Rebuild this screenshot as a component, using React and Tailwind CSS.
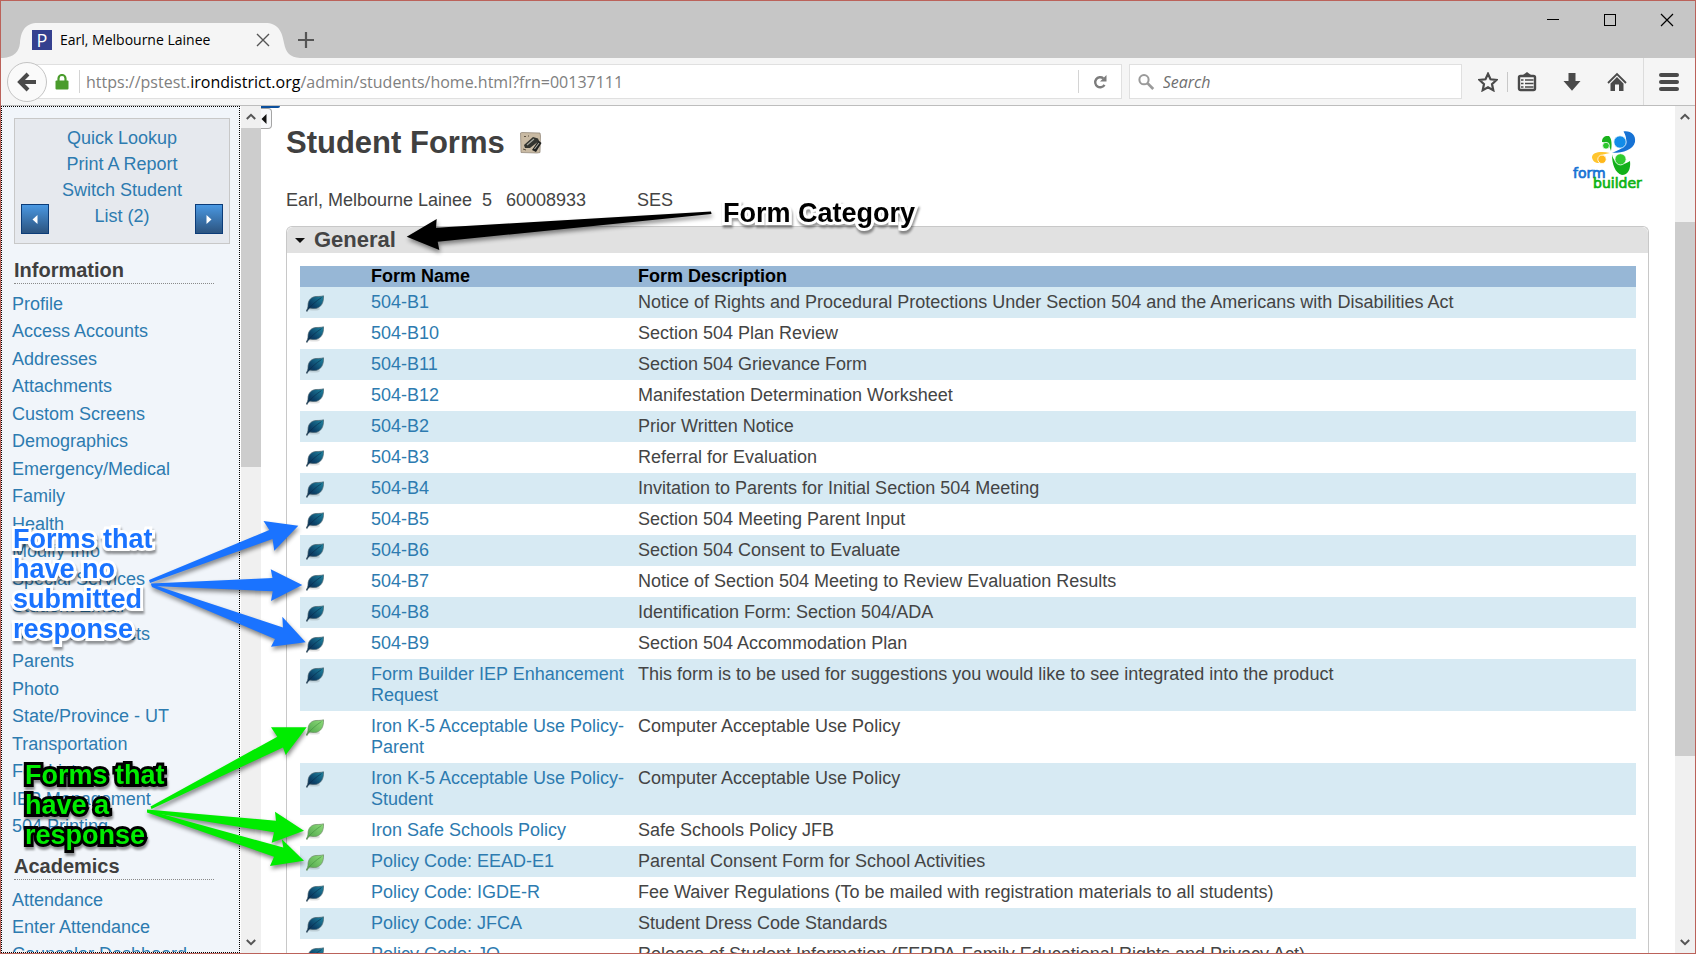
import React from "react";

const infoLinks = [
  "Profile", "Access Accounts", "Addresses", "Attachments", "Custom Screens",
  "Demographics", "Emergency/Medical", "Family", "Health", "Modify Info",
  "Special Services", "Student Email", "Student Contacts", "Parents", "Photo",
  "State/Province - UT", "Transportation", "Fee List", "IEP Management", "504 Printing",
];
const academicLinks = ["Attendance", "Enter Attendance", "Counselor Dashboard"];

const forms = [
  ["504-B1", "Notice of Rights and Procedural Protections Under Section 504 and the Americans with Disabilities Act"],
  ["504-B10", "Section 504 Plan Review"],
  ["504-B11", "Section 504 Grievance Form"],
  ["504-B12", "Manifestation Determination Worksheet"],
  ["504-B2", "Prior Written Notice"],
  ["504-B3", "Referral for Evaluation"],
  ["504-B4", "Invitation to Parents for Initial Section 504 Meeting"],
  ["504-B5", "Section 504 Meeting Parent Input"],
  ["504-B6", "Section 504 Consent to Evaluate"],
  ["504-B7", "Notice of Section 504 Meeting to Review Evaluation Results"],
  ["504-B8", "Identification Form: Section 504/ADA"],
  ["504-B9", "Section 504 Accommodation Plan"],
  ["Form Builder IEP Enhancement Request", "This form is to be used for suggestions you would like to see integrated into the product"],
  ["Iron K-5 Acceptable Use Policy-Parent", "Computer Acceptable Use Policy", true],
  ["Iron K-5 Acceptable Use Policy-Student", "Computer Acceptable Use Policy"],
  ["Iron Safe Schools Policy", "Safe Schools Policy JFB", true],
  ["Policy Code: EEAD-E1", "Parental Consent Form for School Activities", true],
  ["Policy Code: IGDE-R", "Fee Waiver Regulations (To be mailed with registration materials to all students)"],
  ["Policy Code: JFCA", "Student Dress Code Standards"],
  ["Policy Code: JO", "Release of Student Information (FERPA-Family Educational Rights and Privacy Act)"],
];

function Leaf({ done }) {
  return (
    <svg viewBox="0 0 18 17" className="block h-[17px] w-[18px]" role="img" aria-label={done ? "Has response" : "No response"}>
      <ellipse cx="8" cy="14" rx="6" ry="1.6" fill="#000" opacity="0.12" />
      <path
        d="M17.5 .8C17.9 7.600 15 13.300 8.600 13.500C6.200 13.600 4.600 12.800 3.600 13.300C2.600 13.800 1.900 15 1.100 16.500L.2 15.800C1.400 14 2.100 12.500 2 10.300C2 5 5.600 1.700 10 1.500C13 1.400 15.200 1.500 17.500 .8Z"
        fill={done ? "url(#leafGreen)" : "url(#leafBlue)"}
        stroke={done ? "#6c8a63" : "#48606c"}
        strokeWidth="0.7"
      />
      <path d="M2.500 13.500C6 10 10 6 15.500 2.600" fill="none" stroke={done ? "#3f8f3c" : "#082b49"} strokeWidth="0.6" />
    </svg>
  );
}

function Chevron({ up }) {
  return (
    <svg viewBox="0 0 10 7" className="h-[7px] w-[10px]" aria-hidden="true">
      <path d={up ? "M.8 6L5 1.800L9.200 6" : "M.8 1L5 5.200L9.200 1"} fill="none" stroke="#555" strokeWidth="2" />
    </svg>
  );
}

function SideHeading({ children }) {
  return (
    <h2 className="ml-3 mr-[25px] border-b border-dotted border-[#8a8a8a] text-[20px] font-bold leading-[25px] text-[#3f3f3f]">
      {children}
    </h2>
  );
}

function StepButton({ label, d }) {
  return (
    <button aria-label={label} className="flex h-[30px] w-[28px] items-center justify-center border border-[#0c3c78] bg-linear-to-b from-[#4a98e2] to-[#2c5480]">
      <svg viewBox="0 0 6 9" className="h-[9px] w-[6px]"><path d={d} fill="#fff" /></svg>
    </button>
  );
}

function Toolbar() {
  return (
    <div className="flex h-12 shrink-0 items-center border-b border-[#bdbdbd] bg-[#f5f5f5] pl-[6px] font-['Open_Sans',sans-serif]">
      <button aria-label="Back" className="relative z-10 flex size-10 items-center justify-center rounded-full border border-[#c4c4c4] bg-[#fafafa]">
        <svg viewBox="0 0 20 20" className="size-5" fill="none" stroke="#4a4a4a" strokeWidth="4">
          <path d="M19 10H4M11 2L3 10L11 18" />
        </svg>
      </button>
      <div className="-ml-5 flex h-[35px] flex-1 items-center border border-[#e0e0e0] bg-white pl-[27px]">
        <svg viewBox="0 0 14 16" className="h-[16px] w-[14px]" aria-hidden="true">
          <path d="M3.500 8V4.500a3.500 3.500 0 0 1 7 0V8" fill="none" stroke="#4a9c2c" strokeWidth="2.200" />
          <rect x="0.500" y="6.500" width="13" height="9" rx="1" fill="#4a9c2c" />
        </svg>
        <div className="ml-[10px] h-[23px] w-px bg-[#d4d4d4]" />
        <div role="textbox" aria-label="Address" className="flex-1 pl-[6px] text-[16px] leading-6 text-[#808080]">
          https://pstest.<span className="text-black">irondistrict.org</span>/admin/students/home.html?frn=00137111
        </div>
        <div className="h-[23px] w-px bg-[#d4d4d4]" />
        <button aria-label="Reload" className="flex h-full w-[42px] items-center justify-center">
          <svg viewBox="0 0 14 14" className="size-[14px]">
            <path d="M11.500 9.800A5 5 0 1 1 10.300 3.300" fill="none" stroke="#7c7c7c" strokeWidth="2.400" />
            <path d="M13.500 0V6.500H7Z" fill="#7c7c7c" />
          </svg>
        </button>
      </div>
      <label className="ml-[7px] flex h-[35px] w-[333px] items-center gap-2 border border-[#e0e0e0] bg-white pl-2">
        <svg viewBox="0 0 18 18" className="size-[18px]" fill="none" stroke="#9a9a9a">
          <circle cx="6.500" cy="6.500" r="5" strokeWidth="2.200" />
          <path d="M10.500 10.500L16.500 16.500" strokeWidth="3" />
        </svg>
        <input aria-label="Search" placeholder="Search" className="w-full text-[16px] italic leading-6 outline-none placeholder:text-[#707070]" />
      </label>
      <div className="flex h-full items-center text-[#4a4a4a]">
        <button aria-label="Bookmark this page" className="ml-4">
          <svg viewBox="0 0 20 20" className="size-5">
            <path d="M10 1.800L12.500 7.300L18.500 8L14 12.100L15.300 18.200L10 15.200L4.700 18.200L6 12.100L1.500 8L7.500 7.300Z" fill="none" stroke="currentColor" strokeWidth="2.200" />
          </svg>
        </button>
        <div className="ml-[9px] h-5 w-px bg-[#c8c8c8]" />
        <button aria-label="Show bookmarks" className="ml-[9px]">
          <svg viewBox="0 0 20 20" className="size-5">
            <path d="M6 3L10 0L14 3Z" fill="currentColor" />
            <rect x="2" y="4" width="16" height="14" rx="1.500" fill="none" stroke="currentColor" strokeWidth="2.400" />
            <path d="M4 8H6.500M8 8H16.500M4 11.500H6.500M8 11.500H16.500M4 15H6.500M8 15H16.500" stroke="currentColor" strokeWidth="1.500" />
          </svg>
        </button>
        <button aria-label="Downloads" className="ml-[25px]">
          <svg viewBox="0 0 20 20" className="size-5"><path d="M6.500 1H13.500V9H18.500L10 18.800L1.500 9H6.500Z" fill="currentColor" /></svg>
        </button>
        <button aria-label="Home" className="ml-[25px]">
          <svg viewBox="0 0 20 20" className="size-5">
            <path d="M1 11L10 2L19 11" fill="none" stroke="currentColor" strokeWidth="1.800" />
            <path d="M3.500 11.500L10 5L16.500 11.500V19H12V12.500H8V19H3.500Z" fill="currentColor" />
          </svg>
        </button>
        <div className="ml-[16px] h-full w-px bg-[#dcdcdc]" />
        <button aria-label="Open menu" className="ml-[15px] mr-4 flex w-5 flex-col gap-[3px]">
          <span className="h-1 rounded-full bg-[#4a4a4a]" />
          <span className="h-1 rounded-full bg-[#4a4a4a]" />
          <span className="h-1 rounded-full bg-[#4a4a4a]" />
        </button>
      </div>
    </div>
  );
}

function TabStrip() {
  return (
    <div className="flex h-[57px] shrink-0 items-end justify-between bg-[#c6c6c6] font-['Open_Sans',sans-serif]">
      <div className="flex items-center">
        <div className="relative flex h-[35px] w-[288px] items-center pb-px pl-[31px] pr-[19px]">
          <svg viewBox="0 0 300 35" preserveAspectRatio="none" className="absolute left-0 top-0 h-[35px] w-[300px]" aria-hidden="true">
            <path d="M2 35C13 34 18 29 19 20C20 8 24 0 37 0H264C277 0 281 8 283 20C285 30 289 34 299 35Z" fill="#f5f5f5" />
          </svg>
          <span className="relative flex h-5 w-5 items-center justify-center bg-[#34408f] font-['Open_Sans',sans-serif] text-[18px] leading-5 text-white">P</span>
          <span className="relative ml-2 flex-1 text-[14px] leading-5 text-black">Earl, Melbourne Lainee</span>
          <button aria-label="Close tab" className="relative">
            <svg viewBox="0 0 14 14" className="size-[14px]"><path d="M1 1L13 13M13 1L1 13" stroke="#555" strokeWidth="1.400" /></svg>
          </button>
        </div>
        <button aria-label="New tab" className="mb-px ml-[9px]">
          <svg viewBox="0 0 16 16" className="size-4"><path d="M8 0V16M0 8H16" stroke="#555" strokeWidth="2.200" /></svg>
        </button>
      </div>
      <div className="flex h-full items-start gap-[43px] pr-[21px] pt-[12px]">
        <button aria-label="Minimize"><svg viewBox="0 0 14 14" className="size-[14px]"><path d="M1 6.500H13" stroke="#000" /></svg></button>
        <button aria-label="Maximize"><svg viewBox="0 0 14 14" className="size-[14px]"><rect x="1.500" y="1.500" width="11" height="11" fill="none" stroke="#000" /></svg></button>
        <button aria-label="Close"><svg viewBox="0 0 14 14" className="size-[14px]"><path d="M1 1L13 13M13 1L1 13" stroke="#000" strokeWidth="1.200" /></svg></button>
      </div>
    </div>
  );
}

function Logo() {
  return (
    <svg viewBox="0 0 76 62" className="h-[62px] w-[76px]" role="img" aria-label="form builder">
      <path d="M31 12C31 7 34 5.500 38 6C41 9 41 15 40 21C39 17 37 12 31 12Z" fill="#19b21c" />
      <circle cx="35" cy="15.700" r="3.400" fill="#2cc62c" stroke="#fff" strokeWidth="0.800" />
      <path d="M52.500 1.500C60 .5 65 5 64 12C62 20 52 23 41 22.800C50 20 60 14 52.500 1.500Z" fill="#1672d4" />
      <circle cx="49" cy="12" r="6.200" fill="#128ce8" stroke="#fff" strokeWidth="0.800" />
      <path d="M39 23C30 21 21 22 21 27.500C22 31.500 24 33 28 33C26 28 28 24.500 39 23Z" fill="#ffc52e" />
      <circle cx="31" cy="29.300" r="4.200" fill="#ffb71a" stroke="#fff" strokeWidth="0.800" />
      <path d="M41 24.500C43 34 51 37 59 31C60 39 57 45 51 45C44 43 41 34 41 24.500Z" fill="#12b01a" />
      <circle cx="49.500" cy="29.300" r="5.600" fill="#30cb30" stroke="#fff" strokeWidth="0.800" />
      <text x="2" y="48" fontFamily="'DejaVu Sans', sans-serif" fontSize="14" fill="#1672d4" stroke="#1672d4" strokeWidth="0.700">form</text>
      <text x="22" y="58" fontFamily="'DejaVu Sans', sans-serif" fontSize="14" fill="#0db314" stroke="#0db314" strokeWidth="0.700">builder</text>
    </svg>
  );
}

function Sidebar() {
  return (
    <aside className="flex w-[260px] shrink-0">
      <nav className="w-[239px] overflow-hidden border border-dotted border-black bg-[#f1f5fa] pt-[11px] text-[18px] text-[#2d7bb0]">
        <div className="ml-3 mr-[9px] flex h-[126px] items-end justify-between border border-[#c8c8c8] bg-[#e6e9ee] px-[6px] pb-[9px]">
          <StepButton label="Previous student" d="M5.500 0V9L.5 4.500Z" />
          <div className="-mx-2 flex flex-1 flex-col self-start pt-[6px] text-center leading-[26px]">
            <a href="#lookup">Quick Lookup</a>
            <a href="#report">Print A Report</a>
            <a href="#switch">Switch Student<br />List (2)</a>
          </div>
          <StepButton label="Next student" d="M.5 0V9L5.500 4.500Z" />
        </div>
        <div className="mt-[14px]"><SideHeading>Information</SideHeading></div>
        <ul className="mt-[6px] flex h-[550px] flex-col pl-[10px]">
          {infoLinks.map((t) => (
            <li key={t} className="flex flex-1 items-center leading-6"><a href="#info">{t}</a></li>
          ))}
        </ul>
        <div className="mt-[14px]"><SideHeading>Academics</SideHeading></div>
        <ul className="mt-[6px] flex h-[82px] flex-col pl-[10px]">
          {academicLinks.map((t) => (
            <li key={t} className="flex flex-1 items-center leading-6"><a href="#academics">{t}</a></li>
          ))}
        </ul>
      </nav>
      <div className="ml-px flex w-5 flex-col items-center justify-between bg-[#f0f0f0] pb-[7px] pt-[7px]">
        <Chevron up />
        <div className="mt-2 h-[339px] w-full bg-[#cdcdcd]" />
        <div className="flex-1" />
        <Chevron />
      </div>
    </aside>
  );
}

function Main() {
  return (
    <main className="flex min-w-0 flex-1 bg-white">
      <div className="w-[25px] shrink-0">
        <div className="h-[2px] w-[19px] rounded-br bg-[#0b4f9c]" />
        <button aria-label="Collapse menu" className="flex h-[21px] w-[11px] items-center justify-start rounded-r border border-l-0 border-[#a5a5a5] bg-[#f7f8fa]">
          <svg viewBox="0 0 6 10" className="h-[10px] w-[6px]"><path d="M5.500 0V10L.5 5Z" fill="#111" /></svg>
        </button>
      </div>
      <div className="flex min-w-0 flex-1 flex-col pr-[26px] text-[18px] text-[#444]">
        <div className="flex h-[120px] shrink-0 items-start justify-between">
          <div className="pt-[19px]">
            <h1 className="flex items-center gap-[15px] text-[31px] font-bold leading-9 text-[#404040]">
              Student Forms
              <svg viewBox="0 0 22 22" className="size-[22px]" role="img" aria-label="Student alert">
                <path d="M.5 1L2 .5L20 1L20.500 4L20 20.500L17 21L1 20.500L.8 12Z" fill="#c9baa3" stroke="#8d8172" strokeWidth="0.700" />
                <path d="M4 4.500H6M8 4H9M3 17L6 18" stroke="#5d5140" />
                <path d="M4 13L13 5L18 6.500L19 9L10 16L5 16Z" fill="#33342f" />
                <path d="M12 18L18.500 8.500L21.500 11L16 20Z" fill="#1f201e" />
                <path d="M7 13L14 7M14.500 17L19 11" stroke="#a7a8a0" strokeWidth="1.100" />
              </svg>
            </h1>
            <div className="mt-[27px] flex leading-[24px]">
              <span className="w-[196px]">Earl, Melbourne Lainee</span>
              <span className="w-6">5</span>
              <span className="w-[131px]">60008933</span>
              <span>SES</span>
            </div>
          </div>
          <div className="mr-[2px] pt-[24px]"><Logo /></div>
        </div>
        <section className="min-h-0 flex-1 rounded-t-md border border-b-0 border-[#c8c8c8]">
          <h2 className="h-[26px] rounded-t-md bg-[#e1e1e1] pl-2">
            <button className="flex items-center gap-[9px] text-[22px] font-bold leading-[26px]">
              <svg viewBox="0 0 10 5" className="h-[5px] w-[10px]"><path d="M0 0H10L5 5Z" fill="#111" /></svg>
              General
            </button>
          </h2>
          <div className="pl-[13px] pr-3 pt-[13px]">
            <table className="w-full table-fixed border-collapse text-left">
              <colgroup><col className="w-[71px]" /><col className="w-[267px]" /><col /></colgroup>
              <thead>
                <tr className="bg-[#97b7d6] leading-[21px] text-black">
                  <th aria-label="Status" />
                  <th className="font-bold">Form Name</th>
                  <th className="font-bold">Form Description</th>
                </tr>
              </thead>
              <tbody>
                {forms.map(([name, desc, done]) => (
                  <tr key={name} className="align-top leading-[21px] odd:bg-[#d7eaf3]">
                    <td className="pl-[6px] pt-2"><Leaf done={done} /></td>
                    <td className="py-[5px] pr-2 text-[#2d7bb0]"><a href="#form">{name}</a></td>
                    <td className="py-[5px]">{desc}</td>
                  </tr>
                ))}
              </tbody>
            </table>
          </div>
        </section>
      </div>
      <div className="flex w-5 shrink-0 flex-col items-center bg-[#f0f0f0] pb-[7px] pt-[7px]">
        <Chevron up />
        <div className="mt-[102px] h-[534px] w-full bg-[#cdcdcd]" />
        <div className="flex-1" />
        <Chevron />
      </div>
    </main>
  );
}

function Annotations() {
  return (
    <div className="pointer-events-none absolute -left-px -top-px z-20 font-['Liberation_Sans',Arial,sans-serif] text-[27px] font-bold leading-[30px]">
      <svg viewBox="0 0 760 954" className="absolute left-0 top-0 h-[954px] w-[760px] max-w-none drop-shadow-[1px_3px_2px_rgba(0,0,0,0.45)]" aria-hidden="true">
        <path d="M711 211.500L436 227.700L436.700 219L406.700 236.700L439.300 250L437.700 241.700L711.500 214Z" fill="#000" />
        <g fill="#1a73ff">
          <path d="M149 580L269.300 530L263.500 521L298.300 525.700L274.300 550.700L272.500 539L150 583Z" />
          <path d="M151 583.500L272.500 578L270.700 569.300L302.300 585L271 601L272.700 591.300L152 586Z" />
          <path d="M151 584L283 627.500L282.300 616.700L305.700 642.300L271 646.700L275 639L152 587Z" />
        </g>
        <g fill="#00ec00">
          <path d="M150.500 806.500L277.300 736.700L271 727.300L306.700 727.300L285.700 755L283 747.500L151.500 809Z" />
          <path d="M147 809.500L276 820.700L275 811.700L304 830.700L271.700 842.700L274 832.300L147 812Z" />
          <path d="M147 810L283.300 847.500L281.700 839L304 860.700L270 866L274 856.700L147 812.500Z" />
        </g>
      </svg>
      <p className="absolute left-[723px] top-[198px] whitespace-nowrap text-black drop-shadow-[1px_3px_1px_rgba(0,0,0,0.4)] [-webkit-text-stroke:6px_white] [paint-order:stroke_fill]">Form Category</p>
      <p className="absolute left-[13px] top-[524px] whitespace-nowrap text-[#1a73ff] drop-shadow-[1px_3px_1px_rgba(0,0,0,0.4)] [-webkit-text-stroke:6px_white] [paint-order:stroke_fill]">
        Forms that<br />have no<br />submitted<br />response
      </p>
      <p className="absolute left-[25px] top-[760px] whitespace-nowrap text-[#00ec00] drop-shadow-[1px_3px_1px_rgba(0,0,0,0.4)] [-webkit-text-stroke:6px_black] [paint-order:stroke_fill]">
        Forms that<br />have a<br />response
      </p>
    </div>
  );
}

export default function App() {
  return (
    <div className="relative flex h-screen flex-col overflow-hidden border border-[#bb625a] font-['Liberation_Sans',Arial,sans-serif]">
      <svg className="absolute size-0" aria-hidden="true">
        <defs>
          <linearGradient id="leafBlue" x1="1" y1="0" x2="0" y2="1"><stop offset="0" stopColor="#2188a3" /><stop offset="0.600" stopColor="#0b4168" /><stop offset="1" stopColor="#0a2444" /></linearGradient>
          <linearGradient id="leafGreen" x1="1" y1="0" x2="0" y2="1"><stop offset="0" stopColor="#8fdc7c" /><stop offset="1" stopColor="#47a044" /></linearGradient>
        </defs>
      </svg>
      <TabStrip />
      <Toolbar />
      <div className="flex min-h-0 flex-1">
        <Sidebar />
        <Main />
      </div>
      <Annotations />
    </div>
  );
}
